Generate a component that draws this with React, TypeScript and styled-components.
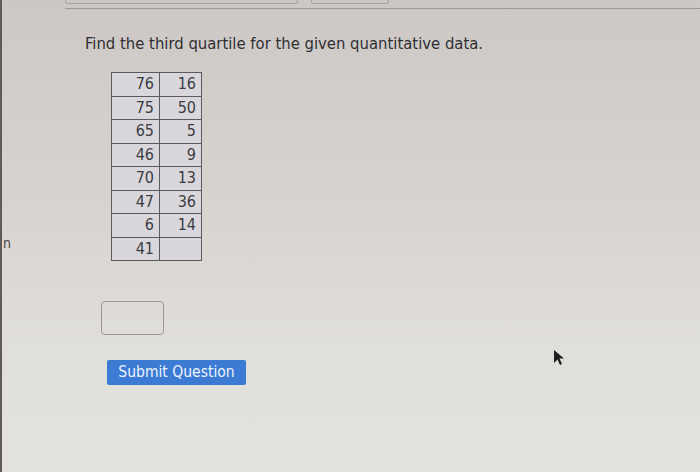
import React from "react";
import styled, { createGlobalStyle } from "styled-components";

const Global = createGlobalStyle`
  html, body { margin: 0; padding: 0; }
  body { width: 700px; height: 472px; overflow: hidden; font-family: "DejaVu Sans Condensed", "DejaVu Sans", sans-serif; }
`;

const Screen = styled.div`
  position: relative;
  width: 700px;
  height: 472px;
  display: flex;
  overflow: hidden;
  background: linear-gradient(180deg, #cdc8c5 0%, #d6d3cf 40%, #e1dfd9 75%, #e4e2dc 100%);
`;

const LeftEdge = styled.div`
  width: 2px;
  flex: none;
  background: #5e5b58;
`;

const Gutter = styled.div`
  width: 63px;
  flex: none;
  display: flex;
  flex-direction: column;
  padding-top: 234px;
`;

const EdgeLetter = styled.span`
  font-size: 14px;
  color: #4a4848;
  margin-left: 1px;
  line-height: 18px;
`;

const Main = styled.div`
  flex: 1;
  display: flex;
  flex-direction: column;
`;

const TabBar = styled.div`
  display: flex;
  gap: 13px;
  height: 8px;
  border-bottom: 1px solid #9d9995;
`;

const Tab = styled.div<{ $w: number }>`
  width: ${(p) => p.$w}px;
  height: 3px;
  border: 1px solid #a8a4a0;
  border-top: none;
  border-radius: 0 0 3px 3px;
`;

const Content = styled.div`
  display: flex;
  flex-direction: column;
  align-items: flex-start;
  padding-left: 20px;
  padding-top: 25px;
`;

const Question = styled.div`
  font-size: 16.5px;
  color: #2f2f33;
  line-height: 20px;
  letter-spacing: 0px;
`;

const Table = styled.table`
  border-collapse: collapse;
  margin: 18px 0 0 26px;
  background: #d9d7dc;
`;

const Row = styled.tr`
  height: 23.5px;
`;

const Cell = styled.td`
  border: 1.5px solid #5a5a60;
  width: 38px;
  padding: 0 5px 0 4px;
  text-align: right;
  font-size: 16px;
  color: #3c3c42;
  line-height: 20px;
`;

const Cell2 = styled(Cell)`
  width: 32px;
`;

const AnswerBox = styled.div`
  margin: 40px 0 0 16px;
  width: 61px;
  height: 32px;
  border: 1.5px solid #9a9794;
  border-radius: 4px;
`;

const Submit = styled.button`
  margin: 25px 0 0 22px;
  width: 139px;
  height: 25px;
  border: none;
  border-radius: 2px;
  background: #3b7bd4;
  color: #eef3fb;
  font-family: "DejaVu Sans Condensed", "DejaVu Sans", sans-serif;
  font-size: 15.5px;
  font-weight: normal;
  padding: 0;
  line-height: 25px;
`;

const Cursor = styled.svg`
  position: absolute;
  left: 553px;
  top: 349px;
`;

const rows: [string, string][] = [
  ["76", "16"],
  ["75", "50"],
  ["65", "5"],
  ["46", "9"],
  ["70", "13"],
  ["47", "36"],
  ["6", "14"],
  ["41", ""],
];

export default function App() {
  return (
    <>
      <Global />
      <Screen>
        <LeftEdge />
        <Gutter>
          <EdgeLetter>n</EdgeLetter>
        </Gutter>
        <Main>
          <TabBar>
            <Tab $w={231} />
            <Tab $w={76} />
          </TabBar>
          <Content>
            <Question>Find the third quartile for the given quantitative data.</Question>
            <Table>
              <tbody>
                {rows.map((r, i) => (
                  <Row key={i}>
                    <Cell>{r[0]}</Cell>
                    <Cell2>{r[1]}</Cell2>
                  </Row>
                ))}
              </tbody>
            </Table>
            <AnswerBox />
            <Submit>Submit Question</Submit>
          </Content>
        </Main>
        <Cursor width="14" height="18" viewBox="0 0 14 18">
          <path d="M1 1 L1 14 L4.5 10.5 L7 16 L9 15 L6.5 9.5 L11 9.5 Z" fill="#1e1e22" />
        </Cursor>
      </Screen>
    </>
  );
}
